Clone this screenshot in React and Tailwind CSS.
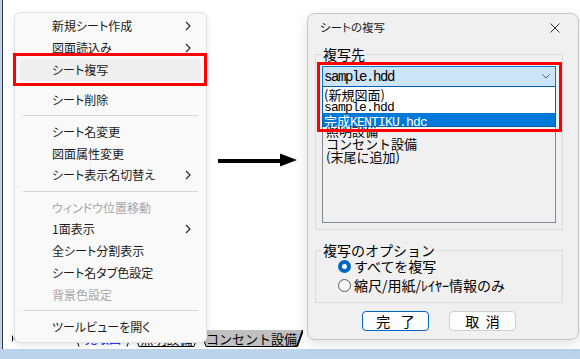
import React from "react";

const jp = "[font-family:'Noto_Sans_CJK_JP','Noto_Sans',sans-serif]";
const mono = "[font-family:'Liberation_Mono','Noto_Sans_CJK_JP',monospace] tracking-[-1.4px]";
const monoSm = "[font-family:'Liberation_Mono','Noto_Sans_CJK_JP',monospace] tracking-[-0.8px]";

const menuItems = [
  { label: "新規シート作成", sub: true },
  { label: "図面読込み", sub: true },
  { label: "シート複写", active: true },
  { label: "シート削除", gap: true },
  { sep: true },
  { label: "シート名変更" },
  { label: "図面属性変更" },
  { label: "シート表示名切替え", sub: true },
  { sep: true },
  { label: "ウィンドウ位置移動", disabled: true },
  { label: "1面表示", sub: true },
  { label: "全シート分割表示" },
  { label: "シート名タブ色設定" },
  { label: "背景色設定", disabled: true },
  { sep: true },
  { label: "ツールビューを開く" },
];

const Chevron = () => (
  <svg width="6" height="10" viewBox="0 0 6 10" className="ml-auto">
    <path d="M1 1l4 4-4 4" fill="none" stroke="#2b2b2b" strokeWidth="1.2" />
  </svg>
);

const ContextMenu = () => (
  <div className="absolute left-[14px] top-[12px] w-[193px] rounded-[6px] border border-[#e2e2e2] bg-[#f9f9f9] pt-[2.5px] pb-[4px] shadow-[0_2px_6px_rgba(0,0,0,0.10)] [font-feature-settings:'palt']">
    {menuItems.map((it, i) =>
      it.sep ? (
        <div key={i} className="h-[10.5px] flex items-center px-[8px]">
          <div className="h-px w-full bg-[#d6d6d6]" />
        </div>
      ) : (
        <div
          key={i}
          className={
            "h-[21.75px] mx-[5px] rounded-[4px] flex items-center pl-[32px] pr-[10px] text-[12px] " +
            (it.gap ? "mt-[8px] " : "") +
            (it.active ? "bg-[#efefef] " : "") +
            (it.disabled ? "text-[#a6a6a6]" : "text-[#1b1b1b]")
          }
        >
          <span>{it.label}</span>
          {it.sub && <Chevron />}
        </div>
      )
    )}
  </div>
);

const Tab = ({ w, fill, text, color, bottom = true, thickRight = false, size = "text-[13px]" }) => (
  <div className="relative h-[17px] shrink-0 flex items-center justify-center" style={{ width: w }}>
    <svg className="absolute inset-0" width={w} height="17" viewBox={`0 0 ${w} 17`}>
      <polygon points={`0,0 ${w},0 ${w - 6},16.5 6,16.5`} fill={fill} />
      <path d={`M0 0L6 16.5`} stroke="#000" strokeWidth="1" fill="none" />
      <path d={`M${w} 0L${w - 6} 16.5`} stroke="#000" strokeWidth={thickRight ? 2 : 1} fill="none" />
      {bottom && <path d={`M6 16.5H${w - 6}`} stroke="#000" strokeWidth="1.2" />}
    </svg>
    <span className={`relative ${size} leading-none`} style={{ color }}>
      {text}
    </span>
  </div>
);

const TabBar = () => (
  <div className="h-[17px] flex items-stretch">
    <div className="w-[70px] flex items-center pl-[9px] gap-[9px]">
      <svg width="8" height="9" viewBox="0 0 8 9">
        <rect x="0" y="0" width="1.5" height="9" fill="#000" />
        <polygon points="8,0 2,4.5 8,9" fill="#000" />
      </svg>
      <svg width="6" height="9" viewBox="0 0 6 9" className="ml-[6px]">
        <polygon points="6,0 0,4.5 6,9" fill="#000" />
      </svg>
      <svg width="6" height="9" viewBox="0 0 6 9" className="ml-[6px]">
        <polygon points="0,0 6,4.5 0,9" fill="#000" />
      </svg>
      <svg width="8" height="9" viewBox="0 0 8 9" className="ml-[4px]">
        <polygon points="0,0 6,4.5 0,9" fill="#000" />
        <rect x="6.5" y="0" width="1.5" height="9" fill="#000" />
      </svg>
    </div>
    <Tab w={60} fill="#ffffff" text="見取図" color="#0000ff" bottom={false} size="text-[12px]" />
    <Tab w={67} fill="#ffffff" text="照明設備" color="#000" />
    <Tab w={103} fill="#c0c0c0" text="コンセント設備" color="#000" thickRight />
  </div>
);

const Radio = ({ checked, children }) => (
  <div className="h-[19px] flex items-center pl-[16px]">
    {checked ? (
      <span className="w-[13px] h-[13px] rounded-full bg-[#0067c0] flex items-center justify-center">
        <span className="w-[5px] h-[5px] rounded-full bg-white" />
      </span>
    ) : (
      <span className="w-[13px] h-[13px] rounded-full border border-[#5c5c5c] bg-[#f6f6f6]" />
    )}
    <span className="ml-[3px] text-[14px] leading-none text-black">{children}</span>
  </div>
);

const Dialog = () => (
  <div className="absolute left-[307px] top-[13px] w-[272px] h-[327px] rounded-[8px] border border-[#c6c6c6] bg-[#f0f0f0] shadow-[0_4px_14px_rgba(0,0,0,0.12)]">
    <div className="h-[28px] flex items-center justify-between pl-[12px] pr-[18px]">
      <span className="text-[11.5px] text-[#1b1b1b] [font-feature-settings:'palt']">シートの複写</span>
      <svg width="10" height="10" viewBox="0 0 10 10">
        <path d="M0.5 0.5l9 9M9.5 0.5l-9 9" stroke="#333" strokeWidth="1" />
      </svg>
    </div>
    <div className="pl-[7px] pr-[15px] text-black">
      <fieldset className="mt-[4px] border border-[#dcdcdc] px-[6px] pb-[6px]">
        <legend className="px-[1px] text-[14px] leading-[16px]">複写先</legend>
        <div className="relative mt-[4px] h-[21px] border border-[#0078d7] bg-[#cce4f7] flex items-center pl-[1px] pr-[5px]">
          <span className={`${mono} text-[14px] leading-none`}>sample.hdd</span>
          <svg width="8" height="5" viewBox="0 0 8 5" className="ml-auto">
            <path d="M0.5 0.5l3.5 3.5 3.5-3.5" fill="none" stroke="#606060" strokeWidth="1" />
          </svg>
          <div className="absolute left-[-1px] right-[-1px] top-full z-10 border border-[#0063b1] bg-white text-[13px] leading-[13px]">
            <div className="h-[13px] pl-[1px] pt-[0.5px]">(新規図面)</div>
            <div className={`h-[13px] pl-[1px] pt-[1px] ${monoSm}`}>sample.hdd</div>
            <div className="h-[13px] pl-[1px] pt-[0.5px] bg-[#0078d7] text-white">
              <span>
                完成<span className={monoSm}>KENTIKU.hdc</span>
              </span>
            </div>
          </div>
        </div>
        <div className="h-[136px] border border-[#828790] bg-[#f0f0f0] pt-[35.5px] pl-[3px] text-[13px] leading-[13.3px]">
          <div className="h-[13.3px]">照明設備</div>
          <div className="h-[13.3px]">コンセント設備</div>
          <div className="h-[13.3px]">(末尾に追加)</div>
        </div>
      </fieldset>

      <fieldset className="mt-[12px] border border-[#dcdcdc] px-[6px] pb-[7.5px]">
        <legend className="px-[1px] text-[14px] leading-[16px]">複写のオプション</legend>
        <div className="-mt-[1.5px]">
          <Radio checked>すべてを複写</Radio>
          <Radio>縮尺/用紙/ﾚｲﾔｰ情報のみ</Radio>
        </div>
      </fieldset>

      <div className="mt-[8px] flex justify-center gap-[20px]">
        <button className="w-[67px] h-[20px] rounded-[4px] border border-[#0067c0] bg-[#fdfdfd] text-[14px] leading-none [word-spacing:7.5px]">
          完 了
        </button>
        <button className="w-[67px] h-[20px] rounded-[4px] border border-[#d0d0d0] bg-[#fdfdfd] text-[14px] leading-none [word-spacing:3.5px]">
          取 消
        </button>
      </div>
    </div>
  </div>
);

const App = () => {
  return (
    <div className={`relative w-[580px] h-[359px] overflow-hidden bg-white ${jp}`}>
      <div className="flex h-[349px]">
        <div className="w-[2px] bg-[#bcd3ec]" />
        <div className="w-px bg-[#3a3a3a]" />
        <div className="flex-1 flex flex-col">
          <div className="flex-1" />
          <TabBar />
          <div className="h-[2px]" />
        </div>
      </div>
      <div className="h-[10px] bg-[#bcd3ec]" />

      <ContextMenu />
      <div className="absolute left-[13px] top-[53px] w-[194px] h-[33px] border-[3px] border-[#ff0000]" />

      <svg className="absolute left-[218px] top-[152px]" width="80" height="16" viewBox="0 0 80 16">
        <rect x="0" y="7" width="64" height="4" fill="#000" />
        <polygon points="62,1.5 79,8 62,14.5" fill="#000" />
      </svg>

      <Dialog />
      <div className="absolute left-[317px] top-[62px] w-[245px] h-[70px] border-[3px] border-[#ff0000] z-20" />
    </div>
  );
};

export default App;
